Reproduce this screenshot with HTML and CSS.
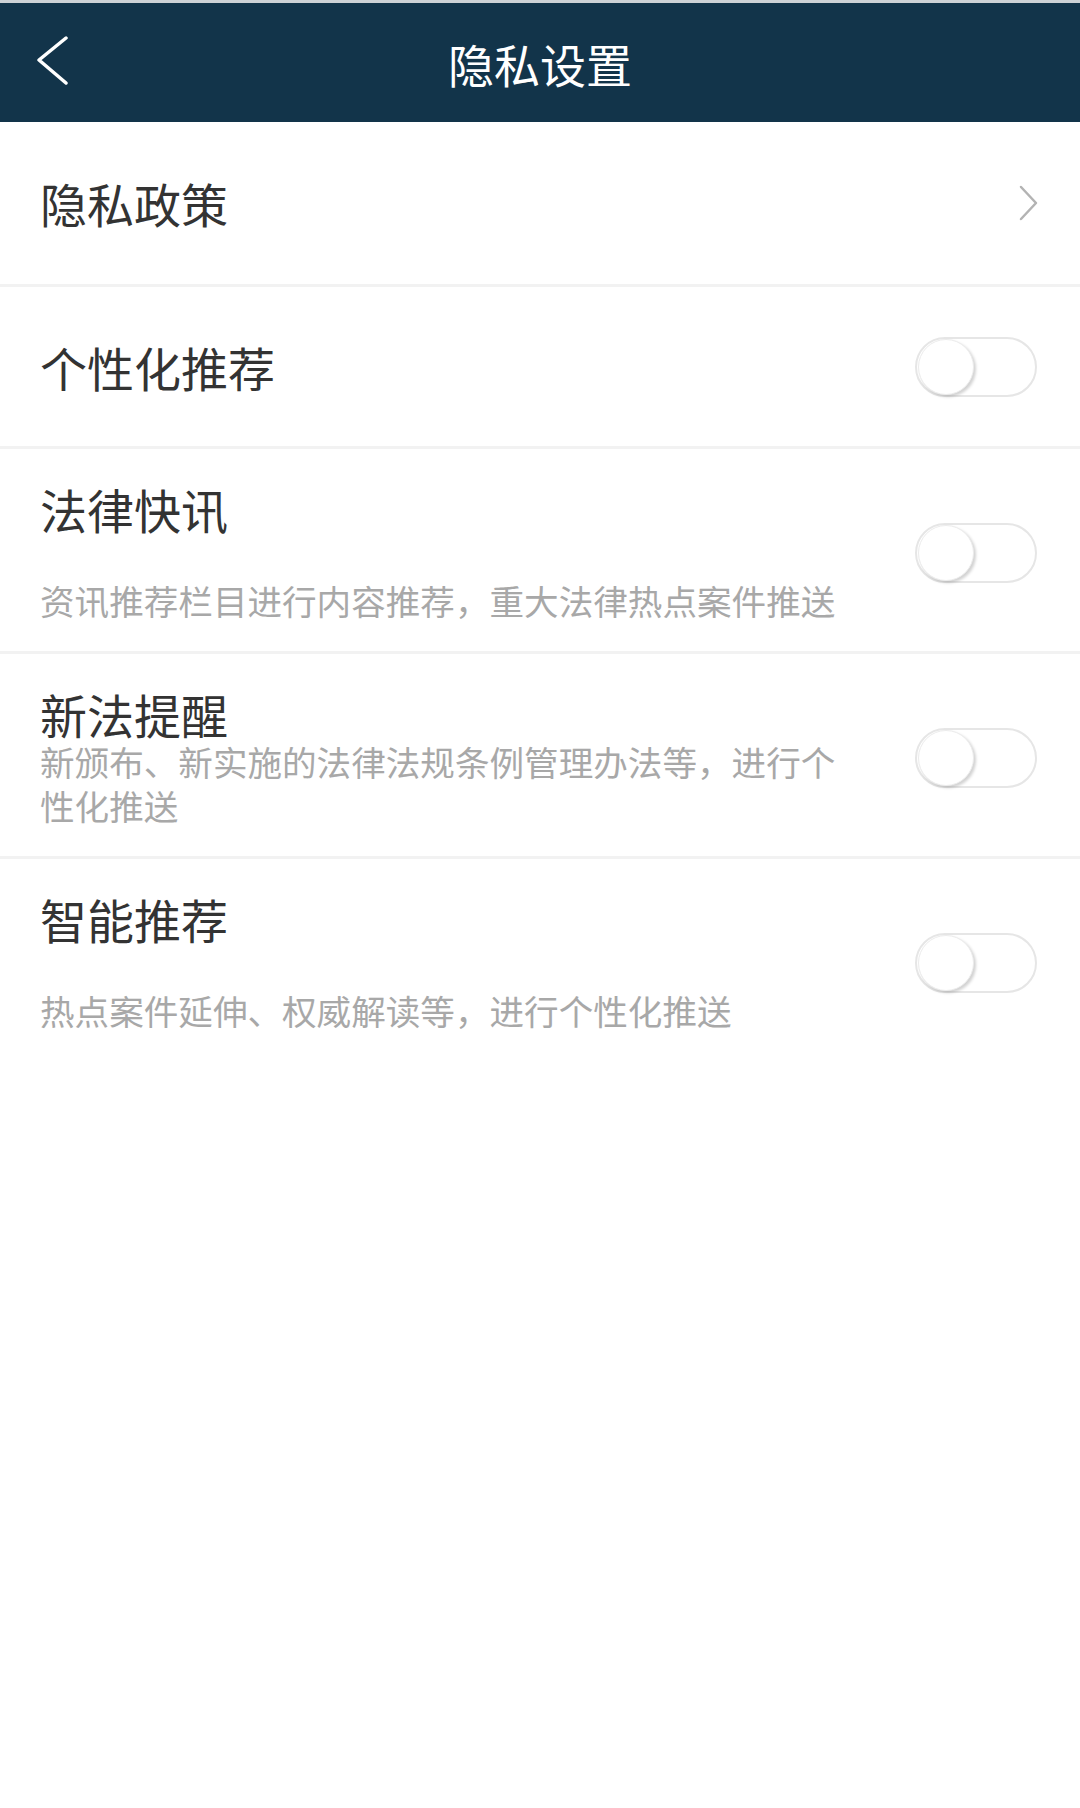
FILE: index.html
```html
<!DOCTYPE html>
<html lang="zh-CN">
<head>
  <meta charset="UTF-8">
  <meta name="viewport" content="width=device-width, initial-scale=1.0">
  <title>隐私设置</title>
  <link rel="stylesheet" href="styles.css">
</head>
<body>
  <header class="nav-bar">
    <a class="nav-back" href="#">
      <svg width="34" height="50" viewBox="0 0 34 50">
        <polyline points="31,2 4,24 31,47" fill="none" stroke="#ffffff" stroke-width="3.5" stroke-linecap="round" stroke-linejoin="round"/>
      </svg>
    </a>
    <h1 class="nav-title">隐私设置</h1>
    <span></span>
  </header>

  <ul class="setting-list">
    <li class="setting-item setting-link">
      <span class="item-title">隐私政策</span>
      <svg class="chevron" width="22" height="36" viewBox="0 0 22 36">
        <polyline points="3,2 18,18 3,34" fill="none" stroke="#b3b3b3" stroke-width="2.5" stroke-linecap="round" stroke-linejoin="round"/>
      </svg>
    </li>
    <li class="setting-item">
      <span class="item-title">个性化推荐</span>
      <span class="switch"><span class="switch-knob"></span></span>
    </li>
    <li class="setting-item setting-item--desc">
      <div class="item-text">
        <span class="item-title">法律快讯</span>
        <span class="item-desc">资讯推荐栏目进行内容推荐，重大法律热点案件推送</span>
      </div>
      <span class="switch"><span class="switch-knob"></span></span>
    </li>
    <li class="setting-item setting-item--desc">
      <div class="item-text">
        <span class="item-title">新法提醒</span>
        <span class="item-desc">新颁布、新实施的法律法规条例管理办法等，进行个性化推送</span>
      </div>
      <span class="switch"><span class="switch-knob"></span></span>
    </li>
    <li class="setting-item setting-item--desc no-border">
      <div class="item-text">
        <span class="item-title">智能推荐</span>
        <span class="item-desc">热点案件延伸、权威解读等，进行个性化推送</span>
      </div>
      <span class="switch"><span class="switch-knob"></span></span>
    </li>
  </ul>
</body>
</html>
```

FILE: styles.css
```css
* {
  margin: 0;
  padding: 0;
  box-sizing: border-box;
}

body {
  font-family: "Noto Sans CJK SC", "Noto Sans", sans-serif;
  background-color: #ffffff;
  color: #333333;
}

/* 顶部导航 */
.nav-bar {
  display: grid;
  grid-template-columns: 1fr auto 1fr;
  align-items: center;
  height: 122px;
  border-top: 3px solid #cdd2d6;
  background-color: #12344a;
}

.nav-back {
  display: flex;
  padding-left: 35px;
  margin-bottom: 4px;
}

.nav-title {
  font-size: 46px;
  font-weight: normal;
  line-height: 1;
  color: #ffffff;
}

/* 设置列表 */
.setting-list {
  list-style: none;
}

.setting-item {
  display: flex;
  align-items: center;
  justify-content: space-between;
  min-height: 162px;
  padding: 0 43px 0 40px;
  border-bottom: 3px solid #f2f2f2;
}

.setting-link {
  min-height: 165px;
  padding-right: 40px;
}

.setting-item--desc {
  padding-top: 35px;
  padding-bottom: 29px;
}

.no-border {
  border-bottom: none;
}

.item-text {
  display: flex;
  flex-direction: column;
  justify-content: space-between;
  min-height: 138px;
}

.item-title {
  font-size: 47px;
  line-height: 50px;
  color: #333333;
}

.item-desc {
  max-width: 820px;
  font-size: 34.6px;
  line-height: 44px;
  color: #a8a8a8;
}

/* 开关 */
.switch {
  display: flex;
  align-items: center;
  flex-shrink: 0;
  width: 122px;
  height: 60px;
  padding: 0 1px;
  border: 2px solid #e6e6e6;
  border-radius: 30px;
  background-color: #ffffff;
}

.switch-knob {
  width: 56px;
  height: 56px;
  border-radius: 50%;
  background-color: #ffffff;
  border: 1px solid #ececec;
  box-shadow: 2px 2px 3px rgba(0, 0, 0, 0.18);
}
```
